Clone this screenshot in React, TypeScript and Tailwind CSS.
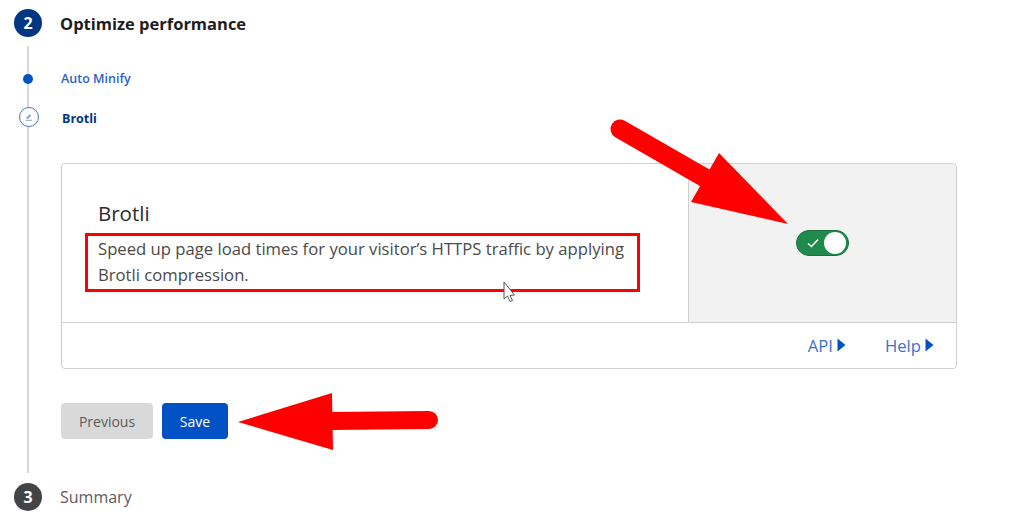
import React from 'react';

const Caret = () => (
  <svg width="9" height="14" viewBox="0 0 9 14" className="ml-[4px]">
    <path d="M0.5 0.5 L8.5 7 L0.5 13.5 Z" fill="#0051c3" />
  </svg>
);

const Annotations = () => (
  <svg width="1024" height="515" viewBox="0 0 1024 515" className="absolute left-0 top-0 pointer-events-none">
    <path d="M620 129 L719 186" stroke="#ff0000" strokeWidth="19" strokeLinecap="round" fill="none" />
    <path d="M719 153 L788 224 L691 202 Z" fill="#ff0000" />
    <path d="M238 422 L332 393 L333 450 Z" fill="#ff0000" />
    <path d="M330 421 L429 420" stroke="#ff0000" strokeWidth="18" strokeLinecap="round" fill="none" />
    <path
      d="M504 282 L504 299 L507.500 296 L510 301.500 L512.500 300.500 L510 295.500 L514.500 295 Z"
      fill="#ffffff"
      stroke="#555555"
      strokeWidth="1"
    />
  </svg>
);

export default function App() {
  return (
    <div className="relative w-[1024px] h-[515px] overflow-hidden bg-white font-['Open_Sans','Noto_Sans',sans-serif]">
      <div className="flex items-center h-[46px] pl-[14px]">
        <div className="flex items-center justify-center size-[28px] rounded-full bg-[#003682] text-white text-[16px] font-bold">2</div>
        <div className="ml-[18px] text-[16.500px] font-bold text-[#1d1d1d] relative top-[1px]">Optimize performance</div>
      </div>

      <div className="ml-[27px] w-[930px] h-[427px] border-l-2 border-[#d9d9d9] pl-[32px] pt-[23px]">
        <div className="relative flex items-center h-[21px] text-[12.500px] font-semibold text-[#2c5fc7]">
          <span className="absolute left-[-38px] top-[5px] size-[10px] rounded-full bg-[#0051c3]" />
          Auto Minify
        </div>
        <div className="relative flex items-center h-[21px] mt-[19px] text-[12.500px] font-bold text-[#003682]">
          <span className="absolute left-[-42px] top-[-2px] flex items-center justify-center size-[20px] rounded-full border border-[#4f78b5] bg-white">
            <svg width="10" height="10" viewBox="0 0 10 10">
              <path d="M2.800 6.500 L6.500 2.800" stroke="#7f9bc8" strokeWidth="1.800" fill="none" />
              <path d="M1.800 8.300 L8 8.300" stroke="#7f9bc8" strokeWidth="0.900" fill="none" />
            </svg>
          </span>
          <span className="pl-px">Brotli</span>
        </div>

        <div className="mt-[33px] h-[206px] rounded-[4px] border border-[#cfcfcf] overflow-hidden">
          <div className="flex h-[159px] border-b border-[#cfcfcf]">
            <div className="relative w-[627px] border-r border-[#cfcfcf] pl-[36px] pt-[36px]">
              <div className="text-[20.500px] leading-[27px] font-medium text-[#2b2b2b]">Brotli</div>
              <p className="mt-[9px] w-[545px] text-[16.670px] leading-[26px] text-[#4a4a4a]">
                Speed up page load times for your visitor’s HTTPS traffic by applying Brotli compression.
              </p>
              <div className="absolute left-[23px] top-[69px] w-[555px] h-[59px] border-[3px] border-[#ff0000]" />
            </div>
            <div className="flex-1 flex items-center justify-center bg-[#f2f2f2]">
              <div className="flex items-center justify-between w-[53px] h-[26px] rounded-full bg-[#1f8a4c] border border-[#17703c] pl-[10px] pr-[2px]">
                <svg width="12" height="10" viewBox="0 0 12 10">
                  <path d="M1 5.500 L4.500 8.500 L11 1.500" stroke="#ffffff" strokeWidth="1.500" fill="none" />
                </svg>
                <span className="size-[22px] rounded-full bg-white" />
              </div>
            </div>
          </div>
          <div className="flex items-center justify-end h-[45px] pr-[22px] pb-[1px] text-[16.670px] text-[#3a6fd0]">
            <span className="flex items-center">API<Caret /></span>
            <span className="flex items-center ml-[39px]">Help<Caret /></span>
          </div>
        </div>

        <div className="flex mt-[34px] gap-[9px]">
          <button className="w-[92px] h-[36px] rounded-[4px] bg-[#d9d9d9] text-[14px] text-[#595959]">Previous</button>
          <button className="w-[66px] h-[36px] rounded-[4px] bg-[#0051c3] text-[14px] text-white">Save</button>
        </div>
      </div>

      <div className="flex items-center h-[28px] mt-[10px] pl-[14px]">
        <div className="flex items-center justify-center size-[28px] rounded-full bg-[#444444] text-white text-[16px] font-bold">3</div>
        <div className="ml-[18px] text-[16px] text-[#5c5c5c]">Summary</div>
      </div>

      <Annotations />
    </div>
  );
}
